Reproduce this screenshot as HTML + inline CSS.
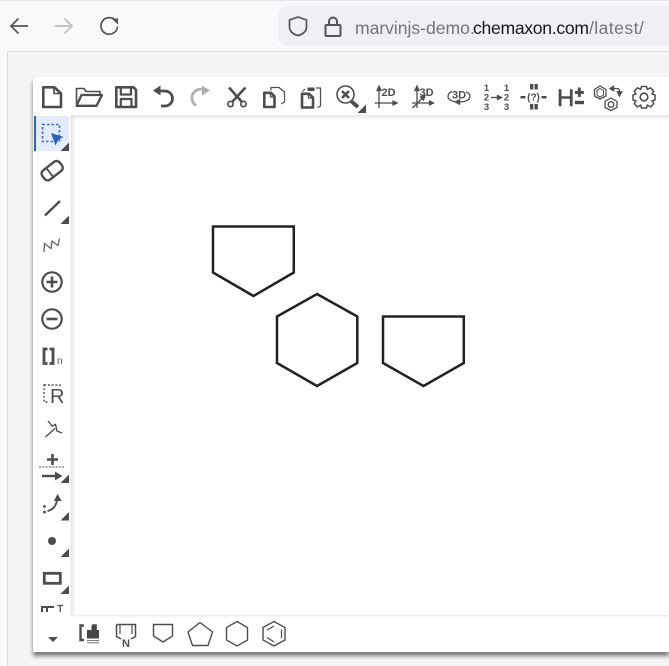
<!DOCTYPE html>
<html>
<head>
<meta charset="utf-8">
<style>
html,body{margin:0;padding:0;width:669px;height:666px;overflow:hidden;background:#f9f9fb;font-family:"Liberation Sans",sans-serif}
.abs{position:absolute}
#page{position:absolute;left:7px;top:51px;width:662px;height:615px;background:#f5f5f5;border-left:1px solid #dcdcdc;border-top:1px solid #dcdcdc;box-sizing:border-box}
#url{position:absolute;left:278px;top:6px;width:391px;height:40px;background:#f0f0f4;border-radius:9px 0 0 9px}
.u{position:absolute;top:17px;font-size:17.6px;line-height:22px;color:#73737a;white-space:nowrap}
#panel{position:absolute;left:33px;top:77px;width:636px;height:575px;background:#fff;box-shadow:0 4px 4px rgba(0,0,0,.5)}
#canvas{position:absolute;left:71px;top:115px;width:598px;height:500px;background:#fff;box-shadow:inset 3px 3px 4px -1px rgba(0,0,0,.12),0 1px 2px rgba(0,0,0,.1)}
#sel{position:absolute;left:34px;top:116px;width:35px;height:35px;background:#e3ecfb;border-left:2px solid #2b62c8;box-sizing:border-box}
svg{position:absolute;left:0;top:0;overflow:visible}
text{font-family:"Liberation Sans",sans-serif}
</style>
</head>
<body>
<div class="abs" style="left:0;top:0;width:669px;height:1px;background:#e6e6ea"></div>
<div id="url"></div>
<div id="page"></div>
<div class="u" style="left:355px;letter-spacing:-.04px">marvinjs-demo.</div>
<div class="u" style="left:473px;color:#17171b;letter-spacing:-.3px">chemaxon.com</div>
<div class="u" style="left:589px;letter-spacing:.42px">/latest/</div>
<div id="panel"></div>
<div id="canvas"></div>
<div id="sel"></div>
<svg width="669" height="666" viewBox="0 0 669 666">
<!-- browser chrome -->
<g fill="none" stroke="#53535a" stroke-width="1.700">
<path d="M28 26H11M18.500 18.500L11 26L18.500 33.500"/>
<path d="M55 26H72M64.500 18.500L72 26L64.500 33.500" stroke="#bdbdc2"/>
<path d="M115.500 20.500A8.300 8.300 0 1 0 117.500 26.500"/>
<path d="M111.500 18.500H118V24.500Z" fill="#53535a" stroke="none"/>
<path d="M298 17L306.500 20V27C306.500 31.500 302.500 34.500 298 35.500C293.500 34.500 289.500 31.500 289.500 27V20Z"/>
<path d="M329 25V21.500A4 4 0 0 1 337 21.500V25M326.500 25H339.500A1 1 0 0 1 340.500 26V35A1 1 0 0 1 339.500 36H326.500A1 1 0 0 1 325.500 35V26A1 1 0 0 1 326.500 25Z" stroke-width="2"/>
</g>
<!-- chemical shapes -->
<g fill="none" stroke="#222" stroke-width="2.500" stroke-linejoin="miter">
<path d="M213 226.500H293.800V272.500L253.500 296L213 272.500Z"/>
<path d="M317 294L357.300 316.500V363L317 386L277 363V316.500Z"/>
<path d="M383 316.500H463.800V363L423.500 386L383 363Z"/>
</g>
<!-- top toolbar -->
<g fill="none" stroke="#4d4d4d" stroke-width="2.600" stroke-linejoin="round">
<path d="M43.300 87.300H54.500L61 93.500V107H43.300Z"/><path d="M54 87.500V93.500H61" stroke-width="1.600"/>
<path d="M76.500 104V88.500H84L86 91.500H100V94" stroke-width="1.600"/><path d="M76.500 105.800L81.500 95H102L96.500 105.800Z" stroke-width="2.300"/>
<path d="M116.300 87.300H133.500L136 89.800V107H116.300Z"/><path d="M120.800 88V94.500H131V88M120.800 107V99H131.500V107" stroke-width="2.200"/>
<path d="M158 91H165A7.500 7.500 0 0 1 165 106H161" stroke-width="2.800"/><path d="M153 90.500L160.500 85.500V95.500Z" fill="#4d4d4d" stroke="none"/>
<path d="M205.500 90.500A8 8 0 0 0 196 105.500" stroke="#b0b0b0" stroke-width="2.800"/><path d="M210 90.500L202 85.500V95.500Z" fill="#b0b0b0" stroke="none"/>
<path d="M229 87.500L241.500 101.500M245.500 87.500L232.500 101.500" stroke-width="2.600"/>
<circle cx="230.500" cy="104" r="2.700" stroke-width="1.700"/><circle cx="243.500" cy="104" r="2.700" stroke-width="1.700"/>
<path d="M264.300 92.800H271L274.500 96.300V107H264.300Z"/><path d="M270.500 93V97H274.500" stroke-width="1.300"/><path d="M271 90.500V87.500H279L284.500 92V102L281 104" stroke-width="1.200"/>
<path d="M302 93.800H309L313 97.500V107.500H302Z"/><path d="M308.500 94V98H313" stroke-width="1.300"/><path d="M302.500 91.500L305 89M316 88H320.500V106L317.500 107.500" stroke-width="1.200"/>
<rect x="307.500" y="87.500" width="7" height="3.500" fill="#4d4d4d" stroke="none"/>
<circle cx="345.500" cy="94.500" r="8.500" stroke-width="1.600"/>
<path d="M342 91L349 98M349 91L342 98" stroke-width="2.600"/>
<path d="M351.500 101.500L358 107" stroke-width="3.800"/>
</g>
<path d="M366 104.500V113H357.500Z" fill="#4d4d4d"/>
<g fill="none" stroke="#4d4d4d" stroke-width="1.300">
<path d="M379 89V108M374.500 103H394.500"/><path d="M379 86L377 90.500H381ZM397 103L393 101V105Z" fill="#4d4d4d"/>
<path d="M417 89V108M412 103H431M412.500 108L423 97.500"/><path d="M417 86L415 90.500H419ZM433.500 103L429.500 101V105ZM425 95.500L420.500 97L423.500 100Z" fill="#4d4d4d"/>
<path d="M452 91.500C449.500 92.500 448 94 448 96.500C448 100 453 102 459 102C465 102 470 100 470 96.500C470 94.500 468.500 92.800 466 92"/>
<path d="M455.500 102L459.500 99.800V104.200Z" fill="#4d4d4d"/>
<path d="M491 97.500H498"/><path d="M501.500 97.500L497.500 95.500V99.500Z" fill="#4d4d4d"/>
</g>
<g fill="#4d4d4d" font-weight="bold">
<text x="381.500" y="96" font-size="11">2D</text>
<text x="419.500" y="96" font-size="11">3D</text>
<text x="452" y="98.500" font-size="11">3D</text>
<text x="486.500" y="91" font-size="9.500" text-anchor="middle">1</text>
<text x="486.500" y="100.500" font-size="9.500" text-anchor="middle">2</text>
<text x="486.500" y="110" font-size="9.500" text-anchor="middle">3</text>
<text x="506.500" y="91" font-size="9.500" text-anchor="middle">1</text>
<text x="506.500" y="100.500" font-size="9.500" text-anchor="middle">2</text>
<text x="506.500" y="110" font-size="9.500" text-anchor="middle">3</text>
<text x="533.500" y="100.500" font-size="10" text-anchor="middle">(?)</text>
<text x="557" y="106" font-size="24" font-weight="normal" stroke="#4d4d4d" stroke-width=".6" style="font-weight:normal">H</text>
</g>
<g fill="#4d4d4d">
<rect x="530" y="84" width="3.300" height="5.500"/><rect x="534.500" y="84" width="3.300" height="5.500"/>
<rect x="530" y="104" width="3.300" height="5.500"/><rect x="534.500" y="104" width="3.300" height="5.500"/>
<rect x="520.500" y="96" width="5" height="2.500"/><rect x="541.500" y="96" width="5" height="2.500"/>
<path d="M575 91H577.800V87.500H580.800V91H583.800V94H580.800V97H577.800V94H575Z"/>
<rect x="574.800" y="100.800" width="9.200" height="3.400"/>
</g>
<g fill="none" stroke="#4d4d4d" stroke-width="1.300">
<path d="M600 86L606 89.500V96L600 99L594.500 96V89.500Z"/><path d="M600 88.500L603.500 90.500V95L600 97L597 95V90.500Z" stroke-width="1"/>
<path d="M611 98L617 101.500V107.500L611 110.500L605 107.500V101.500Z"/><circle cx="611" cy="104.500" r="2.800"/>
<path d="M612 88.500H617Q619.500 88.500 619.500 91V93"/><path d="M619.500 96L617.200 91.800H621.800ZM610 88.500L613.500 86.300V90.700Z" fill="#4d4d4d"/>
<circle cx="644" cy="97" r="3.800" stroke-width="1.600"/>
<path d="M641.500 86.500H646.500L647.300 89.500L650.500 87.800L653.800 91.200L652 94L655 95V100L652 100.700L653.800 103.500L650.500 107L647.300 105L646.500 108H641.500L640.700 105L637.500 107L634.200 103.500L636 100.700L633 100V95L636 94L634.200 91.200L637.500 87.800L640.700 89.500Z" stroke-width="1.500" stroke-linejoin="round"/>
</g>
<!-- left toolbar -->
<rect x="42.500" y="124.500" width="17" height="17" fill="none" stroke="#3c6bc9" stroke-width="1.600" stroke-dasharray="2.500 2"/>
<path d="M51 133L63.500 137L58.500 139.500L55.500 145.500Z" fill="#2b62c8"/>
<path d="M69 142.500V151H60.500Z" fill="#4d4d4d"/>
<g fill="none" stroke="#4d4d4d">
<g transform="rotate(-38 52 170.500)"><rect x="41" y="165" width="22" height="11.500" rx="4" stroke-width="2.400"/><path d="M49 165V176.500" stroke-width="1.800"/></g>
<path d="M45 215.500L60 201" stroke-width="2.400"/>
<path d="M44 252L44.500 243.500L51 248.500L52 241L58 245.500L59.500 238.500" stroke-width="1.300" stroke="#666"/>
<circle cx="52" cy="282" r="9.700" stroke-width="2.200"/><path d="M46.500 282H57.500M52 276.500V287.500" stroke-width="2.600"/>
<circle cx="52" cy="319" r="9.700" stroke-width="2.200"/><path d="M46.500 319H57.500" stroke-width="2.600"/>
<path d="M47.500 349H44V363.500H47.500M49.500 349H53V363.500H49.500" stroke-width="2.800"/>
<rect x="44" y="385" width="16" height="17" stroke-width="1.400" stroke-dasharray="2 1.800"/>
<path d="M45.500 437L55 428.500M48 421L52 426L55.500 424.500L57 431L62 433" stroke-width="1.400"/>
<path d="M39 467H65" stroke-width="1" stroke-dasharray="2 1.300"/>
<path d="M47 459.500H58M52.500 454V465" stroke-width="2.600"/>
<path d="M42 476H58" stroke-width="2.400"/>
<path d="M47.500 511C52.500 510 56.500 506 57.500 498" stroke-width="1.800"/>
<rect x="44.300" y="573.300" width="16" height="10" stroke-width="2.800"/>
<path d="M42 612V607H54M47 607V612" stroke-width="2"/>
<path d="M57.500 605.500H63M60.200 605.500V612" stroke-width="1.300"/>
</g>
<rect x="49" y="388" width="14" height="15" fill="#fff"/>
<g fill="#4d4d4d">
<path d="M69 215.500V224H60.500Z"/>
<text x="57" y="364" font-size="10" fill="#555">n</text>
<text x="50" y="403" font-size="20" fill="#4d4d4d">R</text>
<path d="M55 471.500L62.500 476L55 480.500Z"/>
<path d="M69 474.500V483H60.500Z"/>
<path d="M57.500 494L61.800 501H53.800Z"/>
<circle cx="44.500" cy="506.500" r="1.400"/><circle cx="44.500" cy="512" r="1.400"/>
<path d="M69 512V520.500H60.500Z"/>
<circle cx="52" cy="541" r="4"/>
<path d="M69 548.500V557H60.500Z"/>
<path d="M69 585.500V594H60.500Z"/>
<path d="M48 637H58L53 642Z"/>
</g>
<!-- bottom toolbar -->
<g fill="none" stroke="#4d4d4d">
<path d="M84 625.500H80.500V640H84" stroke-width="2.400"/>
<path d="M92 625H96V630" stroke-width="1.600"/>
<rect x="87" y="630" width="12" height="8.500" fill="#444" stroke="none"/>
<rect x="91.500" y="625.500" width="4.500" height="5" fill="#444" stroke="none"/>
<path d="M87 640.500H99M87 642.800H99" stroke-width="1" stroke="#777"/>
<path d="M116.500 624.500H135.500V636.500L131 639M116.500 624.500V636.500L121 639" stroke-width="1.500"/>
<path d="M120 625V634M132 625V634" stroke-width="1.200"/>
<path d="M153.500 624.500H172.500V636L163 642L153.500 636Z" stroke-width="1.400"/>
<path d="M200 622.500L212.500 632L208 645.500H192.500L188 632Z" stroke-width="1.400"/>
<path d="M237 621.500L247.500 627.500V640L237 646L226.500 640V627.500Z" stroke-width="1.400"/>
<path d="M274 621.500L285 627.500V640L274 646L263 640V627.500Z" stroke-width="1.400"/>
<path d="M267 630L274 626M281.500 629.500V638M267 637.500L274 642" stroke-width="1.200"/>
</g>
<text x="126" y="647" font-size="11" font-weight="bold" fill="#4d4d4d" text-anchor="middle">N</text>
</svg>
</body>
</html>
